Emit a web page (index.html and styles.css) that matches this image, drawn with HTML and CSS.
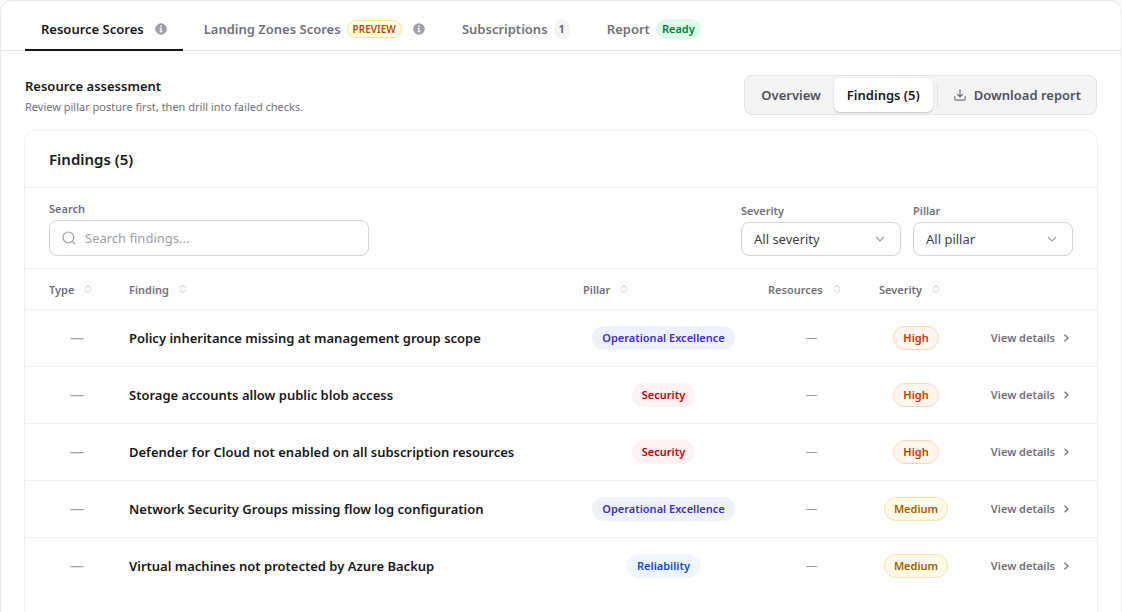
FILE: index.html
```html
<!DOCTYPE html>
<html lang="en">

<head>
    <meta charset="UTF-8">
    <meta name="viewport" content="width=device-width, initial-scale=1.0">
    <title>Resource assessment</title>
    <link rel="stylesheet" href="styles.css">
</head>

<body>
    <!-- Shared icons -->
    <svg class="sprite" aria-hidden="true">
        <symbol id="icon-info" viewBox="0 0 12 12">
            <circle cx="6" cy="6" r="5.8" fill="#9f9fa9"/>
            <rect x="5.2" y="2.6" width="1.6" height="1.5" fill="#fff"/>
            <path d="M4.6 5h2.1v3.2h.8v1h-3v-1h.9V6h-.8z" fill="#fff"/>
        </symbol>
        <symbol id="icon-sort" viewBox="0 0 8 10">
            <path d="M1.500 4.600V3.400L4 1.400l2.500 2v1.200M1.500 5.400v1.200L4 8.600l2.500-2V5.400" fill="none" stroke="#dcdce0" stroke-width="1.200"/>
        </symbol>
        <symbol id="icon-chevron" viewBox="0 0 12 12">
            <path d="M3.500 2.800L7 6 3.500 9.200" fill="none" stroke="#71717b" stroke-width="1.200"/>
        </symbol>
    </svg>

    <div class="panel">
        <nav class="tabs">
            <a href="#" class="tab active">Resource Scores <svg class="info"><use href="#icon-info"/></svg></a>
            <a href="#" class="tab">Landing Zones Scores <span class="pill preview">PREVIEW</span> <svg class="info"><use href="#icon-info"/></svg></a>
            <a href="#" class="tab">Subscriptions <span class="pill count">1</span></a>
            <a href="#" class="tab">Report <span class="pill ready">Ready</span></a>
        </nav>

        <main class="content">
            <div class="page-head">
                <div>
                    <h1>Resource assessment</h1>
                    <p>Review pillar posture first, then drill into failed checks.</p>
                </div>
                <div class="segmented">
                    <button type="button">Overview</button>
                    <button type="button" class="selected">Findings (5)</button>
                    <span class="divider"></span>
                    <button type="button" class="download">
                        <svg width="12" height="12" viewBox="0 0 14 14" fill="none" stroke="#71717b" stroke-width="1.400" stroke-linecap="round" stroke-linejoin="round">
                            <path d="M7 1v8M4 6.200l3 3 3-3M1 9v3q0 1 1 1h10q1 0 1-1V9"/>
                        </svg>
                        Download report
                    </button>
                </div>
            </div>

            <section class="card">
                <h2>Findings (5)</h2>

                <!-- Filters -->
                <form class="filters">
                    <div class="field search">
                        <label for="search">Search</label>
                        <div class="input-box">
                            <svg width="14" height="14" viewBox="0 0 14 14" fill="none" stroke="#9f9fa9" stroke-width="1.200">
                                <circle cx="6.400" cy="6.400" r="5.400"/>
                                <path d="M10.300 10.300l3 3"/>
                            </svg>
                            <input type="text" id="search" placeholder="Search findings...">
                        </div>
                    </div>
                    <div class="field">
                        <label for="severity">Severity</label>
                        <div class="select-box">
                            <select id="severity">
                                <option>All severity</option>
                            </select>
                            <svg width="12" height="12" viewBox="0 0 12 12" fill="none" stroke="#9f9fa9" stroke-width="1.200"><path d="M2 4l4 4 4-4"/></svg>
                        </div>
                    </div>
                    <div class="field">
                        <label for="pillar">Pillar</label>
                        <div class="select-box">
                            <select id="pillar">
                                <option>All pillar</option>
                            </select>
                            <svg width="12" height="12" viewBox="0 0 12 12" fill="none" stroke="#9f9fa9" stroke-width="1.200"><path d="M2 4l4 4 4-4"/></svg>
                        </div>
                    </div>
                </form>

                <!-- Findings table -->
                <table>
                    <thead>
                        <tr>
                            <th class="col-type">Type <svg class="sort"><use href="#icon-sort"/></svg></th>
                            <th>Finding <svg class="sort"><use href="#icon-sort"/></svg></th>
                            <th class="col-pillar">Pillar <svg class="sort"><use href="#icon-sort"/></svg></th>
                            <th class="col-resources">Resources <svg class="sort"><use href="#icon-sort"/></svg></th>
                            <th class="col-severity">Severity <svg class="sort"><use href="#icon-sort"/></svg></th>
                            <th class="col-action"></th>
                        </tr>
                    </thead>
                    <tbody>
                        <tr>
                            <td class="dash">—</td>
                            <td class="finding">Policy inheritance missing at management group scope</td>
                            <td><span class="tag operational">Operational Excellence</span></td>
                            <td class="dash small">—</td>
                            <td><span class="tag high">High</span></td>
                            <td class="action"><a href="#">View details <svg class="chevron"><use href="#icon-chevron"/></svg></a></td>
                        </tr>
                        <tr>
                            <td class="dash">—</td>
                            <td class="finding">Storage accounts allow public blob access</td>
                            <td><span class="tag security">Security</span></td>
                            <td class="dash small">—</td>
                            <td><span class="tag high">High</span></td>
                            <td class="action"><a href="#">View details <svg class="chevron"><use href="#icon-chevron"/></svg></a></td>
                        </tr>
                        <tr>
                            <td class="dash">—</td>
                            <td class="finding">Defender for Cloud not enabled on all subscription resources</td>
                            <td><span class="tag security">Security</span></td>
                            <td class="dash small">—</td>
                            <td><span class="tag high">High</span></td>
                            <td class="action"><a href="#">View details <svg class="chevron"><use href="#icon-chevron"/></svg></a></td>
                        </tr>
                        <tr>
                            <td class="dash">—</td>
                            <td class="finding">Network Security Groups missing flow log configuration</td>
                            <td><span class="tag operational">Operational Excellence</span></td>
                            <td class="dash small">—</td>
                            <td><span class="tag medium">Medium</span></td>
                            <td class="action"><a href="#">View details <svg class="chevron"><use href="#icon-chevron"/></svg></a></td>
                        </tr>
                        <tr>
                            <td class="dash">—</td>
                            <td class="finding">Virtual machines not protected by Azure Backup</td>
                            <td><span class="tag reliability">Reliability</span></td>
                            <td class="dash small">—</td>
                            <td><span class="tag medium">Medium</span></td>
                            <td class="action"><a href="#">View details <svg class="chevron"><use href="#icon-chevron"/></svg></a></td>
                        </tr>
                    </tbody>
                </table>
            </section>
        </main>
    </div>
</body>

</html>
```

FILE: styles.css
```css
/* Reset CSS */
* {
    box-sizing: border-box;
    margin: 0;
    padding: 0;
}

/* Global Styles */
html {
    scrollbar-width: none;
}

body {
    font-family: "Segoe UI", "Noto Sans", "Open Sans", sans-serif;
    font-size: 13px;
    line-height: 20px;
    color: #18181b;
    background-color: #fafafa;
}

a {
    color: inherit;
    text-decoration: none;
}

button,
input,
select {
    font: inherit;
    color: inherit;
}

.sprite {
    display: none;
}

.panel {
    background-color: #fff;
    border: 1px solid #e9e9eb;
    border-radius: 12px;
}

/* Tabs */
.tabs {
    display: flex;
    gap: 5px;
    padding: 0 24px;
    border-bottom: 1px solid #e4e4e7;
}

.tab {
    display: flex;
    align-items: center;
    gap: 6px;
    height: 50px;
    margin-bottom: -1px;
    padding: 8px 16px 0;
    border-bottom: 2px solid transparent;
    color: #71717b;
    font-weight: 600;
}

.tab.active {
    color: #18181b;
    border-bottom-color: #18181b;
}

.info {
    width: 12px;
    height: 12px;
    margin-left: 5px;
}

.pill {
    font-size: 11px;
    border-radius: 10px;
}

.preview {
    padding: 0 5px;
    border: 1px solid #fee685;
    background-color: #fffbeb;
    color: #bb4d00;
    font-size: 10px;
    line-height: 16px;
}

.count {
    padding: 0 5px;
    background-color: #f4f4f5;
    color: #52525c;
}

.ready {
    padding: 0 6px;
    background-color: #dcfce7;
    color: #008236;
}

/* Page heading */
.content {
    padding: 24px 23px;
}

.page-head {
    display: flex;
    justify-content: space-between;
    align-items: flex-start;
    padding: 0 1px;
    margin-bottom: 13px;
}

h1 {
    font-size: 13px;
    font-weight: 600;
    line-height: 22px;
}

.page-head p {
    font-size: 11px;
    line-height: 20px;
    color: #71717b;
}

.segmented {
    display: flex;
    align-items: center;
    height: 40px;
    padding: 2px 3px;
    background-color: #f4f4f5;
    border: 1px solid #e4e4e7;
    border-radius: 8px;
}

.segmented button {
    height: 34px;
    padding: 0 13px;
    border: none;
    border-radius: 6px;
    background: none;
    color: #52525c;
    font-weight: 600;
    cursor: pointer;
}

.segmented .selected {
    background-color: #fff;
    color: #18181b;
    box-shadow: 0 1px 2px rgba(0, 0, 0, 0.2);
}

.segmented .divider {
    width: 1px;
    height: 24px;
    margin: 0 4px;
    background-color: #e4e4e7;
}

.segmented .download {
    display: flex;
    align-items: center;
    gap: 8px;
    padding: 0 12px;
}

/* Findings card */
.card {
    padding-bottom: 64px;
    border: 1px solid #f1f1f3;
    border-radius: 12px;
}

h2 {
    padding: 16px 24px;
    border-bottom: 1px solid #f1f1f3;
    font-size: 15px;
    font-weight: 600;
    line-height: 24px;
}

.filters {
    display: flex;
    align-items: flex-end;
    gap: 12px;
    padding: 12px 24px;
    border-bottom: 1px solid #f1f1f3;
}

.field {
    display: flex;
    flex-direction: column;
    gap: 2px;
    width: 160px;
}

.field.search {
    width: 320px;
    margin-right: auto;
}

.field label {
    font-size: 11px;
    font-weight: 600;
    line-height: 18px;
    color: #71717b;
}

.input-box {
    display: flex;
    align-items: center;
    gap: 9px;
    height: 36px;
    padding: 0 12px;
    border: 1px solid #d4d4d8;
    border-radius: 8px;
}

.input-box input {
    flex: 1;
    min-width: 0;
    border: none;
    outline: none;
    background: none;
}

.input-box input::placeholder {
    color: #9f9fa9;
}

.select-box {
    display: grid;
    align-items: center;
}

.select-box select,
.select-box svg {
    grid-area: 1 / 1;
}

.select-box select {
    height: 34px;
    padding: 0 12px;
    border: 1px solid #d4d4d8;
    border-radius: 8px;
    background: none;
    appearance: none;
    color: #3f3f46;
}

.select-box svg {
    justify-self: end;
    margin-right: 15px;
    pointer-events: none;
}

/* Table */
table {
    width: 100%;
    table-layout: fixed;
    border-collapse: collapse;
}

th {
    height: 40px;
    padding: 2px 12px 0;
    border-bottom: 1px solid #f1f1f3;
    color: #71717b;
    font-size: 11px;
    font-weight: 600;
    text-align: left;
    white-space: nowrap;
}

td {
    height: 57px;
    padding: 0 12px;
    border-bottom: 1px solid #f1f1f3;
    text-align: center;
    white-space: nowrap;
}

tr:last-child td {
    border-bottom: none;
}

th:first-child,
td:first-child {
    padding-left: 24px;
}

th:last-child,
td:last-child {
    padding-right: 24px;
}

.col-type {
    width: 92px;
}

.col-pillar {
    width: 185px;
}

.col-resources {
    width: 111px;
}

.col-severity {
    width: 98px;
}

.col-action {
    width: 132px;
}

.sort {
    width: 8px;
    height: 10px;
    margin-left: 7px;
}

.dash {
    color: #9f9fa9;
    font-size: 14px;
}

.dash.small {
    font-size: 12px;
}

td.finding {
    font-weight: 600;
    text-align: left;
}

.tag {
    display: inline-block;
    padding: 0 9px;
    border: 1px solid transparent;
    border-radius: 12px;
    font-size: 11px;
    font-weight: 600;
    line-height: 22px;
}

.operational {
    background-color: #eef2ff;
    color: #432dd7;
}

.security {
    background-color: #fef2f2;
    color: #c10007;
}

.reliability {
    background-color: #eff6ff;
    color: #1447e6;
}

.high {
    background-color: #fff7ed;
    border-color: #ffd6b8;
    color: #ca3500;
}

.medium {
    background-color: #fefce8;
    border-color: #f8e6a8;
    color: #a65f00;
}

td.action {
    text-align: right;
}

.action a {
    display: inline-flex;
    align-items: center;
    gap: 6px;
    color: #71717b;
    font-size: 11px;
    font-weight: 600;
}

.chevron {
    width: 12px;
    height: 12px;
}
```
